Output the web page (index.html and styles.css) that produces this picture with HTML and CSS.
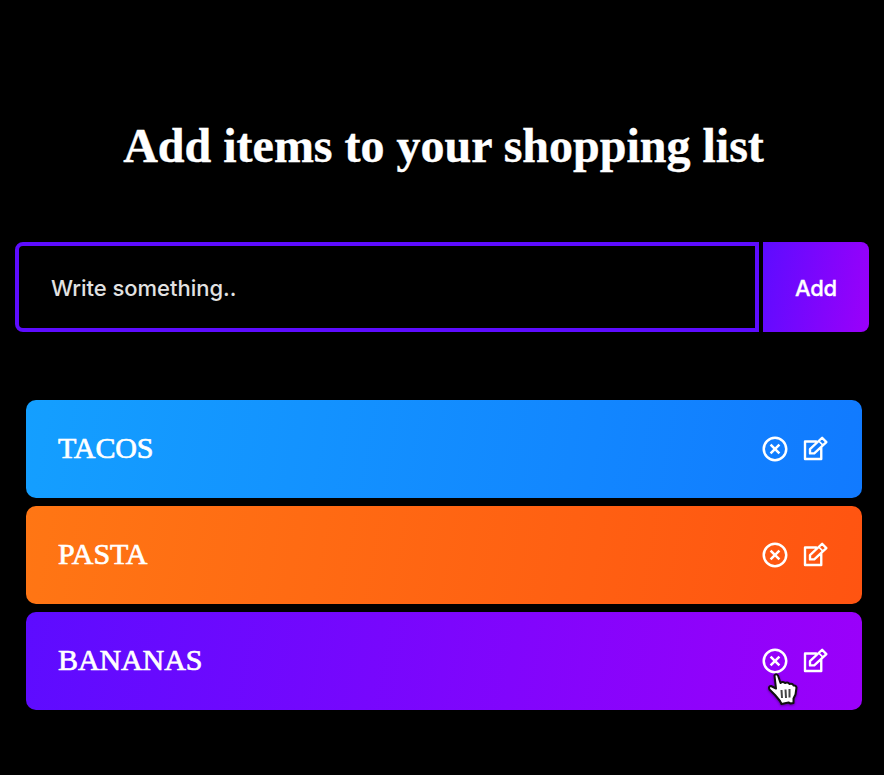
FILE: index.html
```html
<!DOCTYPE html>
<html lang="en">
<head>
<meta charset="utf-8">
<title>Shopping list</title>
<link rel="stylesheet" href="styles.css">
</head>
<body>
<svg class="sprite" aria-hidden="true">
  <symbol id="close" viewBox="0 0 24 24"><path d="M12 22C6.477 22 2 17.523 2 12S6.477 2 12 2s10 4.477 10 10-4.477 10-10 10zm0-2a8 8 0 1 0 0-16 8 8 0 0 0 0 16zm0-9.414l2.828-2.829 1.415 1.415L13.414 12l2.829 2.828-1.415 1.415L12 13.414l-2.828 2.829-1.415-1.415L10.586 12 7.757 9.172l1.415-1.415L12 10.586z"/></symbol>
  <symbol id="edit" viewBox="0 0 24 24"><path class="line" d="M13.500 6H4v14h13v-9.500M8 15.500v-3.400l9.700-9.100 3.400 3.500-9.700 9z"/><path class="ferrule" d="M15.200 5.800l3.100 3.100"/></symbol>
</svg>
<main class="app">
  <h1 class="title">Add items to your shopping list</h1>
  <form class="form">
    <input class="field" type="text" placeholder="Write something.." aria-label="Item">
    <button class="add" type="button">Add</button>
  </form>
  <ul class="list">
    <li class="item blue"><span class="name">TACOS</span><span class="icons"><svg class="icon"><use href="#close"/></svg><svg class="icon"><use href="#edit"/></svg></span></li>
    <li class="item orange"><span class="name">PASTA</span><span class="icons"><svg class="icon"><use href="#close"/></svg><svg class="icon"><use href="#edit"/></svg></span></li>
    <li class="item purple"><span class="name">BANANAS</span><span class="icons"><svg class="icon"><use href="#close"/></svg><svg class="icon"><use href="#edit"/></svg></span>
      <svg class="pointer" viewBox="0 0 31 34"><path d="M7.500 3.500q1.500-2.500 3.500 0l2.500 7.500q2-2 4.500 0 3-1.500 4.500 1 3-1 4 1.500 2.500-.5 3 2l-1 7-2 4v4.500l-3 .5-2-1-7 1.500-1.500-3-5-6-5.500-5.500q-1.500-3 1.500-3.500l5 2.500z"/><path class="creases" d="M14.500 18l.5 8M18.500 17.500l.5 8.500M22.500 17v8.500"/></svg>
    </li>
  </ul>
</main>
</body>
</html>
```
FILE: styles.css
```css
* { box-sizing: border-box; margin: 0; padding: 0; }
body { background: #000; color: #fff; min-height: 100vh; overflow: hidden; }
.sprite { position: absolute; width: 0; height: 0; }
.app { padding: 116px 15px 0; }
.title { height: 60px; margin-left: 3px; font: bold 48px/60px "Liberation Serif", serif; text-align: center; white-space: nowrap; -webkit-text-stroke: .4px #fff; }
.form { display: flex; gap: 4px; margin-top: 66px; height: 90px; }
.field { flex: 1; min-width: 0; border: 4px solid #5d0cff; border-radius: 8px 0 0 8px; background: transparent; padding: 2px 32px 0; color: #fff; font: 500 22px Inter, sans-serif; letter-spacing: -.03px; outline: none; }
.field::placeholder { color: #e2e2e2; opacity: 1; }
.add { width: 106px; padding-top: 2px; border: 0; border-radius: 0 8px 8px 0; background: linear-gradient(100deg, #5d0cff 0%, #9b00fa 100%); color: #fff; font: 500 22px Inter, sans-serif; letter-spacing: -.2px; -webkit-text-stroke: .3px #fff; }
.list { display: flex; flex-direction: column; gap: 8px; margin: 68px 7px 0 11px; list-style: none; }
.item { position: relative; display: flex; align-items: center; justify-content: space-between; height: 98px; padding: 0 32px; border-radius: 10px; }
.blue { background: linear-gradient(100deg, #149fff 0%, #117aff 100%); }
.orange { background: linear-gradient(100deg, #ff7614 0%, #ff5411 100%); }
.purple { background: linear-gradient(100deg, #5d0cff 0%, #9b00fa 100%); }
.name { padding-bottom: 2px; font: 500 30px/36px "Liberation Serif", serif; letter-spacing: -.1px; -webkit-text-stroke: .7px #fff; }
.icons { display: flex; gap: 10px; }
.icon { width: 30px; height: 30px; fill: #fff; }
.line { fill: none; stroke: #fff; stroke-width: 1.9; stroke-linejoin: round; }
.ferrule { fill: none; stroke: #fff; stroke-width: 1.4; }
.pointer { position: absolute; left: 741px; top: 60px; width: 31px; height: 34px; fill: #fff; stroke: #111; stroke-width: 2; stroke-linejoin: round; filter: drop-shadow(0 1px 1px rgba(0, 0, 0, .4)); }
.creases { fill: none; stroke: #444; }
```
